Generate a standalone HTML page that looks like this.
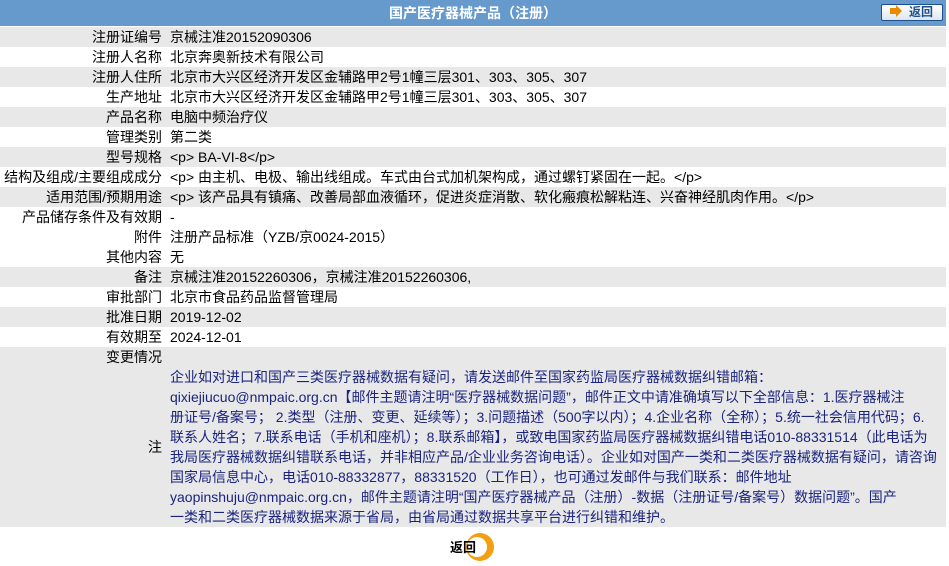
<!DOCTYPE html>
<html><head><meta charset="utf-8"><style>
body{margin:0;background:#fff;font-family:"Liberation Sans","Noto Sans CJK SC",sans-serif;font-size:14px;color:#000;}
.hdr{position:absolute;left:0;top:0;width:946px;height:26px;background:#6699cc;color:#fff;font-weight:bold;text-align:center;line-height:27px;font-size:14px;}
.btn{position:absolute;left:881px;top:4px;width:62px;height:17px;box-sizing:border-box;border:1px solid #1c4f8c;border-radius:2px;background:linear-gradient(#fff,#dde6ef);}
.btn .ar{position:absolute;left:8px;top:3px;width:6px;height:6px;background:#e88a00;}
.btn .ar2{position:absolute;left:14px;top:0px;width:0;height:0;border-top:6px solid transparent;border-bottom:6px solid transparent;border-left:6px solid #e88a00;}
.btn span{position:absolute;left:27px;top:0;line-height:15px;color:#1c4f8c;font-weight:bold;font-size:12px;}
table{position:absolute;left:0;top:27px;width:946px;border-collapse:collapse;table-layout:fixed;}
td{padding:0;height:20px;line-height:20px;vertical-align:middle;white-space:nowrap;overflow:visible;}
td.l{width:162px;text-align:right;padding-right:8px;}
tr.g td{background:#e8e8e8;}
.note{color:#1a237e;line-height:20px;padding:0;vertical-align:top;}
.foot{position:absolute;left:449px;top:533px;}
</style></head><body>
<div class="hdr">国产医疗器械产品（注册）</div>
<div class="btn"><div class="ar"></div><div class="ar2"></div><span>返回</span></div>
<table>
<colgroup><col style="width:170px"><col></colgroup>
<tr class="g"><td class="l">注册证编号</td><td>京械注准20152090306</td></tr>
<tr><td class="l">注册人名称</td><td>北京奔奥新技术有限公司</td></tr>
<tr class="g"><td class="l">注册人住所</td><td>北京市大兴区经济开发区金辅路甲2号1幢三层301、303、305、307</td></tr>
<tr><td class="l">生产地址</td><td>北京市大兴区经济开发区金辅路甲2号1幢三层301、303、305、307</td></tr>
<tr class="g"><td class="l">产品名称</td><td>电脑中频治疗仪</td></tr>
<tr><td class="l">管理类别</td><td>第二类</td></tr>
<tr class="g"><td class="l">型号规格</td><td>&lt;p&gt; BA-VI-8&lt;/p&gt;</td></tr>
<tr><td class="l">结构及组成/主要组成成分</td><td>&lt;p&gt; 由主机、电极、输出线组成。车式由台式加机架构成，通过螺钉紧固在一起。&lt;/p&gt;</td></tr>
<tr class="g"><td class="l">适用范围/预期用途</td><td>&lt;p&gt; 该产品具有镇痛、改善局部血液循环，促进炎症消散、软化瘢痕松解粘连、兴奋神经肌肉作用。&lt;/p&gt;</td></tr>
<tr><td class="l">产品储存条件及有效期</td><td>-</td></tr>
<tr><td class="l">附件</td><td>注册产品标准（YZB/京0024-2015）</td></tr>
<tr><td class="l">其他内容</td><td>无</td></tr>
<tr class="g"><td class="l">备注</td><td>京械注准20152260306，京械注准20152260306,</td></tr>
<tr><td class="l">审批部门</td><td>北京市食品药品监督管理局</td></tr>
<tr class="g"><td class="l">批准日期</td><td>2019-12-02</td></tr>
<tr><td class="l">有效期至</td><td>2024-12-01</td></tr>
<tr class="g"><td class="l">变更情况</td><td></td></tr>
<tr class="g"><td class="l" style="height:160px">注</td><td class="note">企业如对进口和国产三类医疗器械数据有疑问，请发送邮件至国家药监局医疗器械数据纠错邮箱：<br>qixiejiucuo@nmpaic.org.cn【邮件主题请注明“医疗器械数据问题”，邮件正文中请准确填写以下全部信息：1.医疗器械注<br>册证号/备案号； 2.类型（注册、变更、延续等）；3.问题描述（500字以内）；4.企业名称（全称）；5.统一社会信用代码；6.<br>联系人姓名；7.联系电话（手机和座机）；8.联系邮箱】，或致电国家药监局医疗器械数据纠错电话010-88331514（此电话为<br>我局医疗器械数据纠错联系电话，并非相应产品/企业业务咨询电话）。企业如对国产一类和二类医疗器械数据有疑问，请咨询<br>国家局信息中心，电话010-88332877，88331520（工作日），也可通过发邮件与我们联系：邮件地址<br>yaopinshuju@nmpaic.org.cn，邮件主题请注明“国产医疗器械产品（注册）-数据（注册证号/备案号）数据问题”。国产<br>一类和二类医疗器械数据来源于省局，由省局通过数据共享平台进行纠错和维护。</td></tr>
</table>
<div class="foot">
<svg width="50" height="30" viewBox="0 0 50 30"><circle cx="31" cy="14" r="14" fill="#f0a010"/><circle cx="28" cy="14" r="10" fill="#fff"/><text x="1" y="19" font-family="Liberation Sans,Noto Sans CJK SC,sans-serif" font-size="13" font-weight="bold" fill="#000">返回</text></svg>
</div>
</body></html>
